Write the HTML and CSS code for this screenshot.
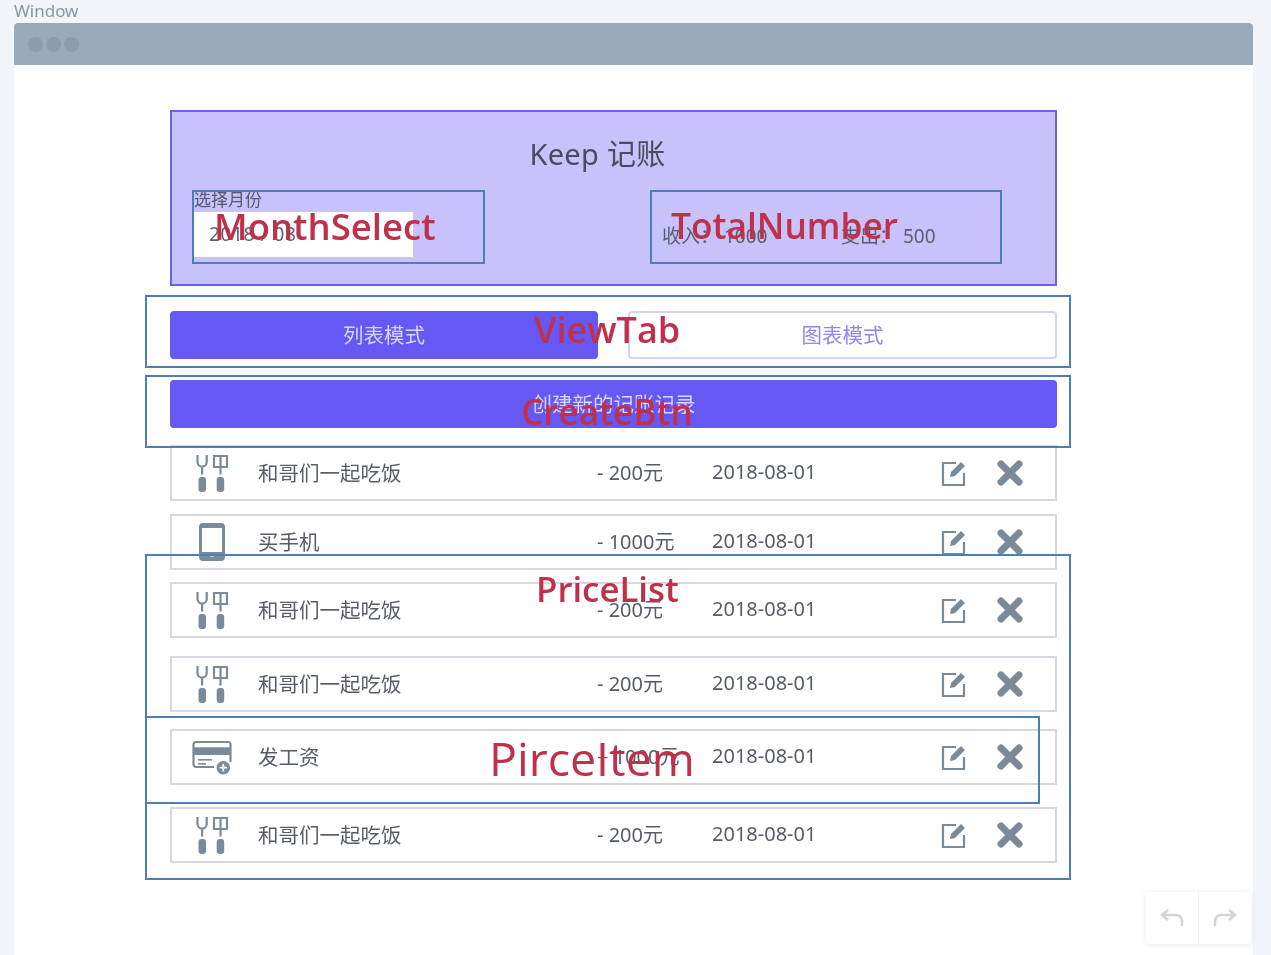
FILE: index.html
```html
<!DOCTYPE html>
<html lang="zh-CN">
<head>
    <meta charset="UTF-8">
    <title>Window</title>
    <link rel="stylesheet" href="styles.css">
</head>
<body>
    <svg class="sprite" width="0" height="0">
        <symbol id="i-food" viewBox="0 0 34 38">
            <path d="M1.500 1v7a4.600 4.600 0 0 0 9.200 0V1M6.100 13v7.500M18 2h13v11H18zM24.500 2v18.500" fill="none" stroke="currentColor" stroke-width="2.200"/>
            <rect x="2.500" y="23" width="7.500" height="15" rx="3"/>
            <rect x="20.700" y="23" width="7.500" height="15" rx="3"/>
        </symbol>
        <symbol id="i-phone" viewBox="0 0 26 38">
            <path fill-rule="evenodd" d="M4 0h18a4 4 0 0 1 4 4v30a4 4 0 0 1-4 4H4a4 4 0 0 1-4-4V4a4 4 0 0 1 4-4zM3 5v24h20V5z"/>
            <rect x="11" y="32" width="4" height="1.500" fill="#fff"/>
        </symbol>
        <symbol id="i-card" viewBox="0 0 40 36">
            <path d="M22 28H4a2.500 2.500 0 0 1-2.500-2.500V5.500A2.500 2.500 0 0 1 4 3h32a2.500 2.500 0 0 1 2.500 2.500V23" fill="none" stroke="currentColor" stroke-width="2.200"/>
            <rect x="1.500" y="8.300" width="37" height="7.700"/>
            <rect x="6" y="20" width="14" height="1.600"/>
            <rect x="6" y="24" width="8" height="1.600"/>
            <circle cx="31.300" cy="28.700" r="8.500" fill="#fff"/>
            <circle cx="31.300" cy="28.700" r="6.800"/>
            <path d="M31.300 25v7.400M27.600 28.700H35" stroke="#fff" stroke-width="1.800"/>
        </symbol>
        <symbol id="i-edit" viewBox="0 0 26 26">
            <path d="M15 3H2v22h21V13" fill="none" stroke="currentColor" stroke-width="2.200"/>
            <path d="M9 17l1-5L20 2l4 4-10 10z"/>
        </symbol>
        <symbol id="i-close" viewBox="0 0 26 26">
            <path d="M4 4l18 18M22 4L4 22" fill="none" stroke="currentColor" stroke-width="7" stroke-linecap="round"/>
        </symbol>
        <symbol id="i-undo" viewBox="0 0 24 20">
            <path d="M8 2L2 7l6 5M2 7h14a6 6 0 0 1 6 6v5" fill="none" stroke="currentColor" stroke-width="2.500"/>
        </symbol>
        <symbol id="i-redo" viewBox="0 0 24 20">
            <path d="M16 2l6 5-6 5M22 7H8a6 6 0 0 0-6 6v5" fill="none" stroke="currentColor" stroke-width="2.500"/>
        </symbol>
    </svg>

    <div class="caption">Window</div>
    <div class="window">
        <div class="window-bar">
            <span class="dot"></span>
            <span class="dot"></span>
            <span class="dot"></span>
        </div>
        <div class="window-body">
            <header class="app-header">
                <h1 class="app-title">Keep 记账</h1>
                <div class="header-row">
                    <div class="month-select">
                        <div class="month-label">选择月份</div>
                        <div class="month-input">2018 / 08</div>
                    </div>
                    <div class="total-number">
                        <span>收入： 1000</span>
                        <span>支出： 500</span>
                    </div>
                </div>
            </header>

            <div class="view-tab">
                <div class="tab tab-active">列表模式</div>
                <div class="tab">图表模式</div>
            </div>

            <button class="create-btn">创建新的记账记录</button>

            <ul class="price-list">
                <li class="price-item">
                    <svg class="item-icon icon-food"><use href="#i-food"/></svg>
                    <span class="item-name">和哥们一起吃饭</span>
                    <span class="item-value">- 200元</span>
                    <span class="item-value">2018-08-01</span>
                    <svg class="act"><use href="#i-edit"/></svg>
                    <svg class="act"><use href="#i-close"/></svg>
                </li>
                <li class="price-item gap-13">
                    <svg class="item-icon icon-phone"><use href="#i-phone"/></svg>
                    <span class="item-name">买手机</span>
                    <span class="item-value">- 1000元</span>
                    <span class="item-value">2018-08-01</span>
                    <svg class="act"><use href="#i-edit"/></svg>
                    <svg class="act"><use href="#i-close"/></svg>
                </li>
                <li class="price-item gap-12">
                    <svg class="item-icon icon-food"><use href="#i-food"/></svg>
                    <span class="item-name">和哥们一起吃饭</span>
                    <span class="item-value">- 200元</span>
                    <span class="item-value">2018-08-01</span>
                    <svg class="act"><use href="#i-edit"/></svg>
                    <svg class="act"><use href="#i-close"/></svg>
                </li>
                <li class="price-item gap-18">
                    <svg class="item-icon icon-food"><use href="#i-food"/></svg>
                    <span class="item-name">和哥们一起吃饭</span>
                    <span class="item-value">- 200元</span>
                    <span class="item-value">2018-08-01</span>
                    <svg class="act"><use href="#i-edit"/></svg>
                    <svg class="act"><use href="#i-close"/></svg>
                </li>
                <li class="price-item gap-17">
                    <svg class="item-icon icon-card"><use href="#i-card"/></svg>
                    <span class="item-name">发工资</span>
                    <span class="item-value">+ 1000元</span>
                    <span class="item-value">2018-08-01</span>
                    <svg class="act"><use href="#i-edit"/></svg>
                    <svg class="act"><use href="#i-close"/></svg>
                </li>
                <li class="price-item gap-22">
                    <svg class="item-icon icon-food"><use href="#i-food"/></svg>
                    <span class="item-name">和哥们一起吃饭</span>
                    <span class="item-value">- 200元</span>
                    <span class="item-value">2018-08-01</span>
                    <svg class="act"><use href="#i-edit"/></svg>
                    <svg class="act"><use href="#i-close"/></svg>
                </li>
            </ul>
        </div>
    </div>

    <!-- annotations drawn on top of the wireframe -->
    <div class="note-box box-month"></div>
    <div class="note-box box-total"></div>
    <div class="note-box box-tab"></div>
    <div class="note-box box-create"></div>
    <div class="note-box box-list"></div>
    <div class="note-box box-item"></div>
    <div class="note-text text-month">MonthSelect</div>
    <div class="note-text text-total">TotalNumber</div>
    <div class="note-text text-tab">ViewTab</div>
    <div class="note-text text-create">CreateBtn</div>
    <div class="note-text text-list">PriceList</div>
    <div class="note-text text-item">PirceItem</div>

    <div class="history">
        <div class="history-btn"><svg class="history-icon"><use href="#i-undo"/></svg></div>
        <div class="history-btn"><svg class="history-icon"><use href="#i-redo"/></svg></div>
    </div>
</body>
</html>
```

FILE: styles.css
```css
* {
    box-sizing: border-box;
}
body {
    margin: 0;
    height: 955px;
    overflow: hidden;
    position: relative;
    background-color: #f1f4f9;
    font-family: "Noto Sans", "Noto Sans CJK SC", sans-serif;
    color: #5a6470;
    filter: blur(0.5px);
}
.sprite {
    display: none;
}
.caption {
    height: 23px;
    padding-left: 14px;
    font-size: 17px;
    line-height: 21px;
    color: #8a96a3;
}
.window {
    width: 1239px;
    height: 932px;
    margin-left: 14px;
    background-color: #fff;
}
.window-bar {
    height: 42px;
    padding-left: 14px;
    display: flex;
    align-items: center;
    gap: 3px;
    background-color: #9aaab8;
    border-radius: 4px 4px 0 0;
}
.dot {
    width: 15px;
    height: 15px;
    border-radius: 50%;
    background-color: #8c9cab;
}
.window-body {
    width: 887px;
    margin-left: 156px;
    padding-top: 45px;
}

/* header */
.app-header {
    height: 176px;
    padding: 0 21px;
    background-color: #c8c2fa;
    border: 2px solid #6d60e6;
}
.app-title {
    margin: 0;
    padding: 20px 32px 0 0;
    height: 78px;
    font-size: 29px;
    line-height: 44px;
    font-weight: 400;
    letter-spacing: 0.3px;
    text-align: center;
    color: #474c60;
}
.header-row {
    display: flex;
}
.month-select {
    width: 458px;
}
.month-label {
    height: 22px;
    margin-left: 1px;
    font-size: 17px;
    line-height: 20px;
    color: #525870;
}
.month-input {
    width: 219px;
    height: 45px;
    margin-left: 1px;
    padding-left: 15px;
    font-size: 19px;
    line-height: 44px;
    letter-spacing: 0.6px;
    background-color: #fff;
}
.total-number {
    width: 350px;
    display: grid;
    grid-template-columns: 179px 1fr;
    padding: 34px 0 0 11px;
    font-size: 19px;
    line-height: 24px;
    color: #575e73;
}

/* tabs */
.view-tab {
    margin-top: 25px;
    display: flex;
    gap: 30px;
}
.tab {
    width: 429px;
    height: 48px;
    font-size: 20.500px;
    line-height: 44px;
    text-align: center;
    color: #8f87ee;
    border: 2px solid #d6d2f6;
    border-radius: 4px;
}
.tab-active {
    width: 428px;
    color: #d9d6fb;
    background-color: #6558f5;
    border-color: #6558f5;
}
.create-btn {
    display: block;
    width: 887px;
    height: 48px;
    margin-top: 21px;
    padding-bottom: 3px;
    font-family: inherit;
    font-size: 20.500px;
    color: #d9d6fb;
    background-color: #6558f5;
    border: none;
    border-radius: 4px;
}

/* list */
.price-list {
    list-style: none;
    margin: 17px 0 0;
    padding: 0;
}
.price-item {
    width: 887px;
    height: 56px;
    padding-left: 22px;
    display: grid;
    grid-template-columns: 64px 339px 115px 229px 56px 26px;
    align-items: center;
    background-color: #fff;
    border: 2px solid #d5d8e2;
}
.item-name {
    padding-bottom: 3px;
    font-size: 20.500px;
    color: #565d67;
}
.item-value {
    padding-bottom: 3px;
    font-size: 20px;
    color: #565d67;
}
.gap-12 { margin-top: 12px; }
.gap-13 { margin-top: 13px; }
.gap-17 { margin-top: 17px; }
.gap-18 { margin-top: 18px; }
.gap-22 { margin-top: 22px; }
.item-icon {
    display: block;
    fill: #7b8a99;
    color: #7b8a99;
}
.icon-food { width: 34px; height: 38px; margin-left: 2px; }
.icon-phone { width: 26px; height: 38px; margin-left: 5px; }
.icon-card { width: 40px; height: 36px; margin-left: -2px; }
.act {
    display: block;
    width: 26px;
    height: 26px;
    fill: #7b8a99;
    color: #7b8a99;
}

/* annotations */
.note-box {
    position: absolute;
    border: 2px solid #4a7fb8;
}
.box-month { left: 192px; top: 190px; width: 293px; height: 74px; }
.box-total { left: 650px; top: 190px; width: 352px; height: 74px; }
.box-tab { left: 145px; top: 295px; width: 926px; height: 73px; }
.box-create { left: 145px; top: 375px; width: 926px; height: 73px; }
.box-list { left: 145px; top: 554px; width: 926px; height: 326px; }
.box-item { left: 145px; top: 716px; width: 895px; height: 88px; }
.note-text {
    position: absolute;
    font-family: "Open Sans", sans-serif;
    font-weight: 600;
    color: #c0304b;
    line-height: 1;
    white-space: nowrap;
}
.text-month { left: 214px; top: 208px; font-size: 36.500px; }
.text-total { left: 671px; top: 208px; font-size: 35.300px; }
.text-tab { left: 534px; top: 312px; font-size: 36px; }
.text-create { left: 521px; top: 394px; font-size: 35.200px; }
.text-list { left: 536px; top: 572px; font-size: 34.800px; }
.text-item { left: 489px; top: 735px; font-size: 46.500px; font-weight: 400; }

/* undo / redo */
.history {
    position: absolute;
    left: 1146px;
    top: 892px;
    width: 105px;
    height: 52px;
    display: flex;
    background-color: #fff;
    border-radius: 4px;
    box-shadow: 0 1px 6px rgba(120, 135, 150, 0.18);
}
.history-btn {
    flex: 1;
    display: flex;
    align-items: center;
    justify-content: center;
}
.history-btn + .history-btn {
    border-left: 1px solid #eef0f3;
}
.history-icon {
    width: 24px;
    height: 20px;
    color: #d0d5db;
}
```
